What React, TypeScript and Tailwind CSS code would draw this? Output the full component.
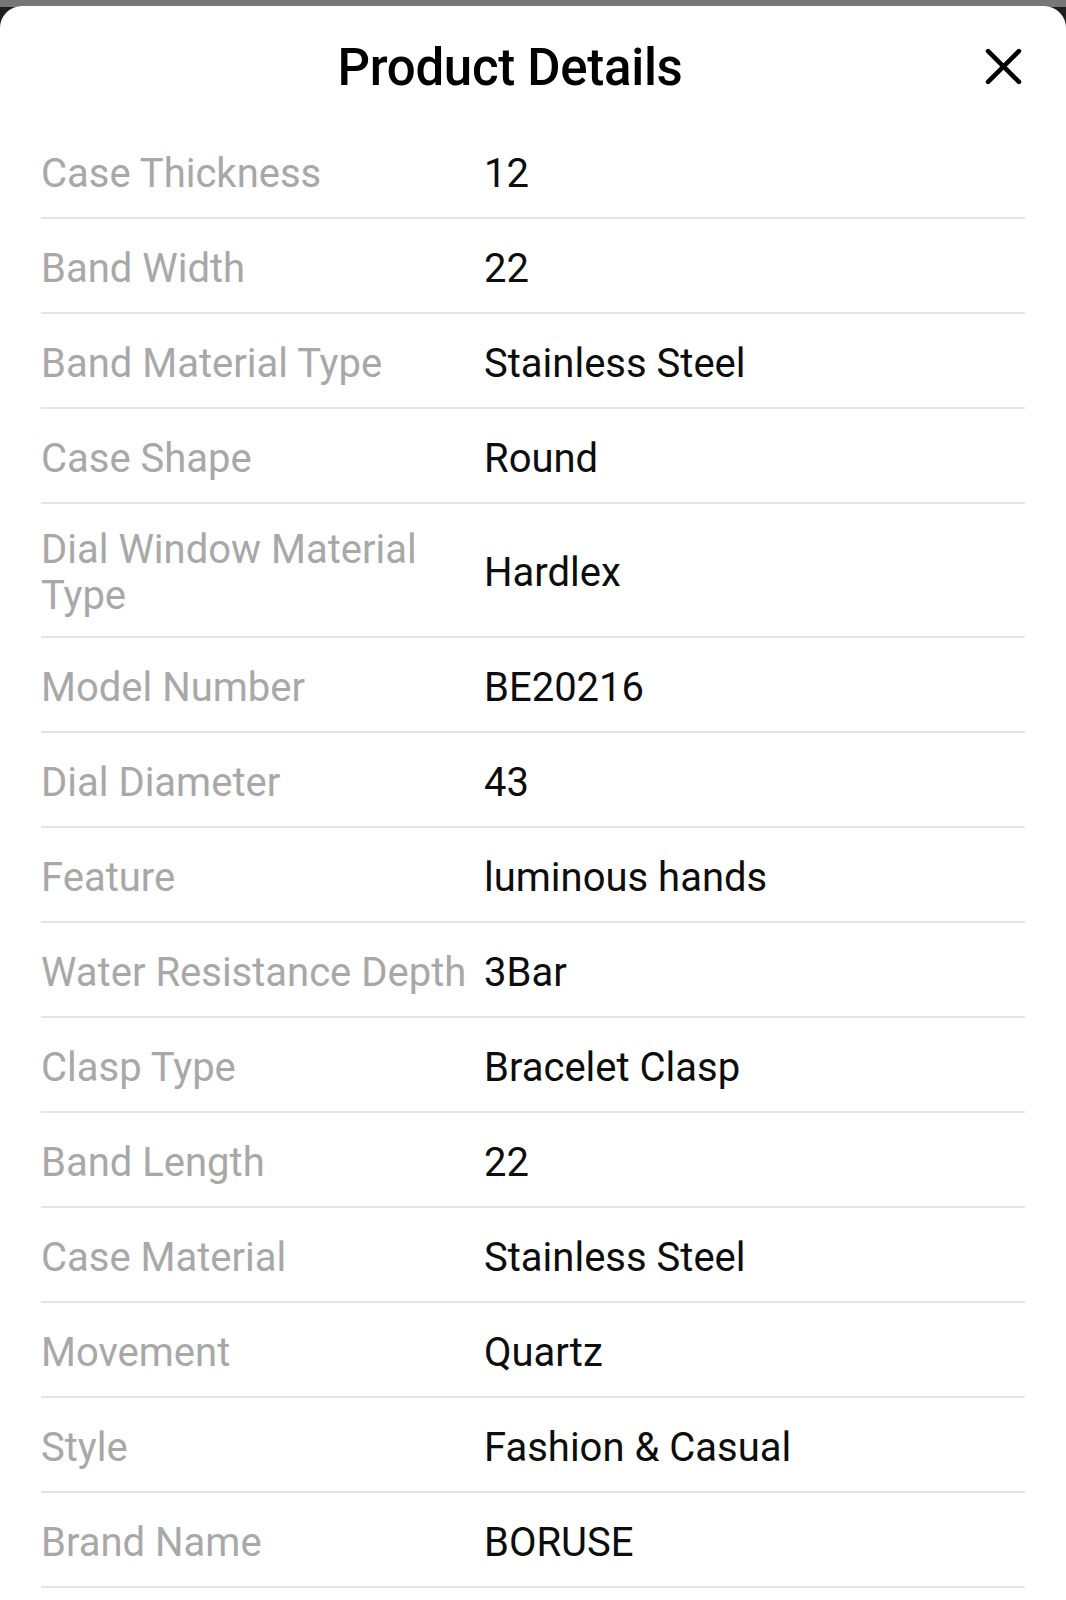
import * as React from "react"

const rows: [string, string][] = [
  ["Case Thickness", "12"],
  ["Band Width", "22"],
  ["Band Material Type", "Stainless Steel"],
  ["Case Shape", "Round"],
  ["Dial Window Material Type", "Hardlex"],
  ["Model Number", "BE20216"],
  ["Dial Diameter", "43"],
  ["Feature", "luminous hands"],
  ["Water Resistance Depth", "3Bar"],
  ["Clasp Type", "Bracelet Clasp"],
  ["Band Length", "22"],
  ["Case Material", "Stainless Steel"],
  ["Movement", "Quartz"],
  ["Style", "Fashion & Casual"],
  ["Brand Name", "BORUSE"],
]

export default function App() {
  return (
    <div className="min-h-[1600px] w-[1066px] bg-[#1f1f1f] font-['Roboto','Liberation_Sans',sans-serif]">
      <div className="h-[7px] bg-[#777777]" />
      <div className="-mt-px min-h-[1594px] rounded-t-[22px] bg-white">
        <div className="relative flex h-[118px] items-center justify-center pr-[46px] pt-[5px]">
          <h1 className="text-[51px] font-medium leading-none tracking-[-0.3px] text-black">
            Product Details
          </h1>
          <button className="absolute right-[44px] top-[42px] h-[37px] w-[37px]">
            <svg viewBox="0 0 36 36" className="h-full w-full">
              <path
                d="M3 3 L33 33 M33 3 L3 33"
                stroke="#000"
                strokeWidth="4.5"
                strokeLinecap="round"
              />
            </svg>
          </button>
        </div>
        <div className="mx-[41px]">
          {rows.map(([label, value]) => (
            <div
              key={label}
              className="flex min-h-[95px] items-center border-b-2 border-[#e4e4e4] pt-[23px] pb-[17px] text-[40px] leading-[46px]"
            >
              <div className="w-[443px] shrink-0 pr-[8px] text-[#a8a8a8]">{label}</div>
              <div className="text-[#0d0d0d]">{value}</div>
            </div>
          ))}
        </div>
      </div>
    </div>
  )
}
